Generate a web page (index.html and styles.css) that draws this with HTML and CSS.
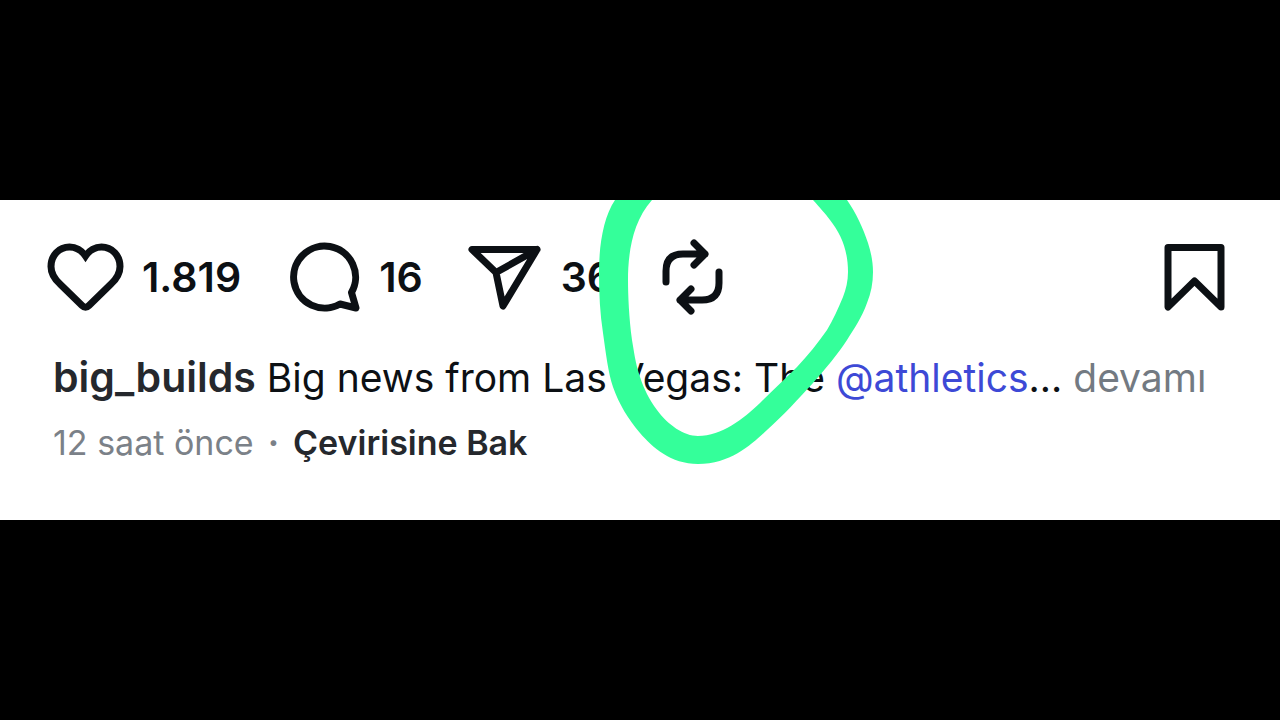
FILE: index.html
```html
<!DOCTYPE html>
<html lang="tr">
<head>
    <meta charset="UTF-8">
    <meta name="viewport" content="width=device-width, initial-scale=1.0">
    <title>big_builds</title>
    <link rel="stylesheet" href="styles.css">
</head>
<body>
    <article class="post">
        <div class="actions">
            <button class="action" type="button" aria-label="Beğen">
                <svg class="icon heart" viewBox="0 0 76 76">
                    <path d="M37.500 17C33 10.500 27.500 8 21.500 8C11 8 3 16.500 3 27.500C3 35 6.500 40 12 45L34 66.500Q37.500 70 41 66.500L63 45C68.500 40 72 35 72 27.500C72 16.500 64 8 53.500 8C47.500 8 42 10.500 37.500 17Z"/>
                </svg>
                <span>1.819</span>
            </button>
            <button class="action" type="button" aria-label="Yorum yap">
                <svg class="icon" viewBox="0 0 76 76">
                    <path d="M66.500 53.500A31 31 0 1 0 55 65L71 69Z"/>
                </svg>
                <span>16</span>
            </button>
            <button class="action" type="button" aria-label="Gönder">
                <svg class="icon" viewBox="0 0 76 76">
                    <path d="M5 10.500H70L36 67L29 33.500ZM29 33.500L70 10.500"/>
                </svg>
                <span>36</span>
            </button>
            <div class="repost">
                <button class="action" type="button" aria-label="Yeniden paylaş">
                    <svg class="icon" viewBox="0 0 76 76">
                        <path d="M9 43V32Q9 15 26 15H48M37 4L48 15L37 26"/>
                        <path d="M62 33V44Q62 61 45 61H23M34 50L23 61L34 72"/>
                    </svg>
                </button>
                <svg class="marker" viewBox="0 0 280 266" aria-hidden="true">
                    <path d="M20 0C8 18 4 46 4 73C4 94 5 114 8 133C11 154 13 172 18 187C24 204 33 219 45 233C57 247 76 264 103 264C137 264 158 243 172 230C188 216 204 198 218 183C231 168 243 154 252 140C259 129 267 117 272 103C276 93 278 83 278 72C278 62 276 52 273 43C268 28 261 13 252 0H218C225 8 230 13 235 20C246 34 253 50 253 72C253 81 251 89 248 97C243 109 238 120 232 130C223 143 213 155 202 167C190 179 177 191 165 203C148 219 127 236 103 236C89 236 73 225 62 210C54 199 49 189 45 177C40 162 39 151 37 140C34 118 33 95 33 80C33 58 36 23 57 0Z"/>
                </svg>
            </div>
            <button class="action save" type="button" aria-label="Kaydet">
                <svg class="icon" viewBox="0 0 76 76">
                    <path d="M12 8.500H65V68L38.500 42L12 68Z"/>
                </svg>
            </button>
        </div>
        <p class="caption">
            <strong>big_builds</strong> <span>Big news from Las Vegas: The</span>
            <a class="mention" href="#">@athletics</a>... <a class="more" href="#">devamı</a>
        </p>
        <p class="meta">
            <time>12 saat önce</time>
            <span class="dot">·</span>
            <button class="translate" type="button">Çevirisine Bak</button>
        </p>
    </article>
</body>
</html>
```
FILE: styles.css
```css
* {
    margin: 0;
    padding: 0;
    box-sizing: border-box;
}

body {
    min-height: 100vh;
    display: flex;
    flex-direction: column;
    justify-content: center;
    background: #000;
    font-family: Inter, "Liberation Sans", sans-serif;
}

.post {
    padding: 39px 48px 57px;
    background: #fff;
    color: #0c1014;
}

button {
    border: none;
    background: none;
    color: inherit;
    font: inherit;
    cursor: pointer;
}

a {
    text-decoration: none;
}

.actions {
    display: flex;
    align-items: center;
    gap: 44px;
}

.action {
    display: flex;
    align-items: center;
    gap: 18px;
    font-size: 41px;
    font-weight: 600;
}

.icon {
    width: 76px;
    height: 76px;
    overflow: visible;
    fill: none;
    stroke: #0c1014;
    stroke-width: 7;
    stroke-linecap: round;
    stroke-linejoin: round;
}

.heart {
    stroke-linejoin: miter;
}

.repost {
    position: relative;
}

/* hand drawn ring around the repost button */
.marker {
    position: absolute;
    top: -39px;
    left: -62px;
    width: 280px;
    height: 266px;
    fill: #34ff9a;
    pointer-events: none;
}

.save {
    margin-left: auto;
}

.caption {
    margin-top: 38px;
    padding-left: 5px;
    font-size: 39px;
    line-height: 48px;
}

.caption strong {
    color: #25282d;
    font-size: 41px;
    font-weight: 600;
}

.mention {
    color: #3d49d6;
}

.more {
    color: #737a82;
}

.meta {
    display: flex;
    align-items: center;
    gap: 14px;
    margin-top: 21px;
    padding-left: 5px;
    color: #7b8188;
    font-size: 34px;
    line-height: 40px;
}

.dot {
    font-weight: 700;
}

.translate {
    color: #25282d;
    font-weight: 600;
}
```
